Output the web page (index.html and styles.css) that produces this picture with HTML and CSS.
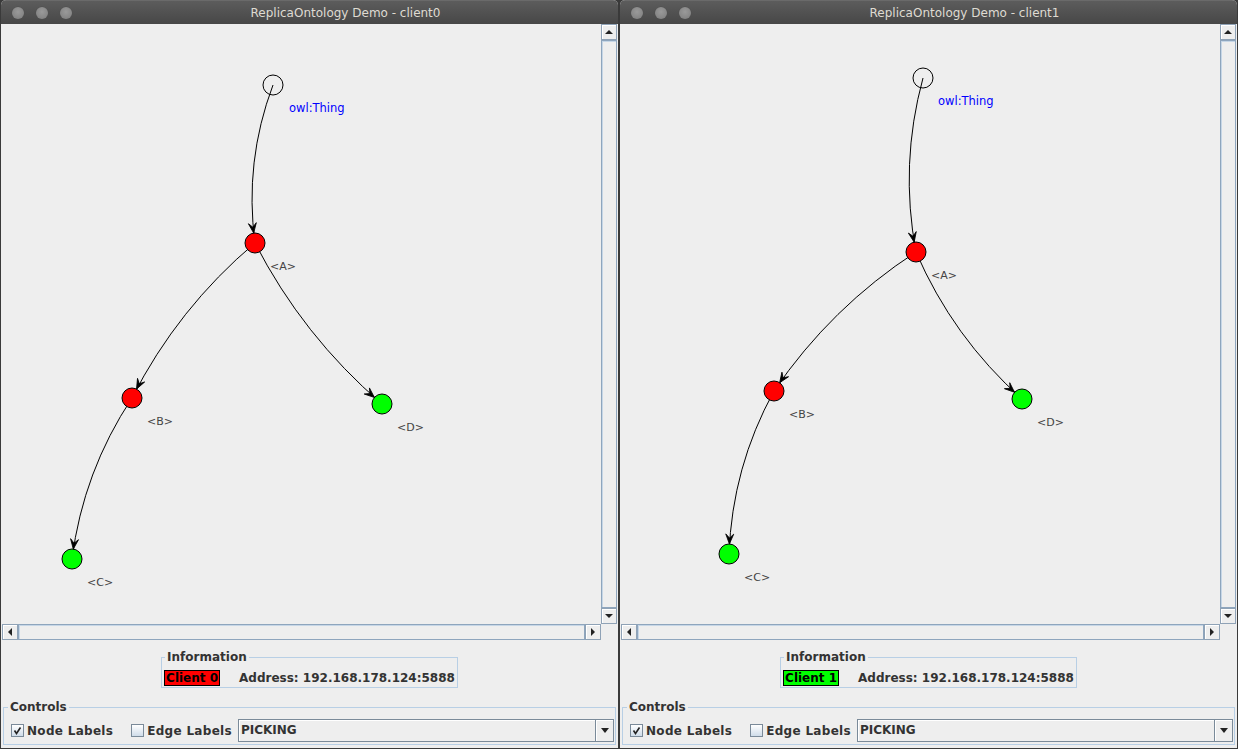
FILE: index.html
```html
<!DOCTYPE html>
<html>
<head>
<meta charset="utf-8">
<link rel="stylesheet" href="styles.css">
</head>
<body>
<div class="desktop">
  <div class="window">
    <div class="titlebar">
      <div class="wbuttons"><span class="wbtn"></span><span class="wbtn"></span><span class="wbtn"></span></div>
      <div class="wtitle">ReplicaOntology Demo - client0</div>
    </div>
    <div class="scrollpane">
      <svg class="canvas" width="600" height="600" viewBox="1 24 600 600">
        <g class="edges">
          <path d="M273 85 Q244.13 161.74 255 243"/>
          <path d="M255 243 Q177.83 308.07 132 398"/>
          <path d="M255 243 Q302.8 335.89 382 404"/>
          <path d="M132 398 Q83.26 471.52 72 559"/>
        </g>
        <g class="arrows">
          <polygon points="0,0 -10,-4 -6,0 -10,4" transform="translate(253.67 233.09) rotate(82.38)"/>
          <polygon points="0,0 -10,-4 -6,0 -10,4" transform="translate(136.54 389.09) rotate(117)"/>
          <polygon points="0,0 -10,-4 -6,0 -10,4" transform="translate(374.42 397.48) rotate(40.7)"/>
          <polygon points="0,0 -10,-4 -6,0 -10,4" transform="translate(73.28 549.08) rotate(97.3)"/>
        </g>
        <circle class="node root" cx="273" cy="85" r="10"/>
        <circle class="node red" cx="255" cy="243" r="10"/>
        <circle class="node red" cx="132" cy="398" r="10"/>
        <circle class="node green" cx="382" cy="404" r="10"/>
        <circle class="node green" cx="72" cy="559" r="10"/>
        <text class="lbl thing" x="289" y="112">owl:Thing</text>
        <text class="lbl" x="270" y="270">&lt;A&gt;</text>
        <text class="lbl" x="147" y="425">&lt;B&gt;</text>
        <text class="lbl" x="397" y="431">&lt;D&gt;</text>
        <text class="lbl" x="87" y="586">&lt;C&gt;</text>
      </svg>
      <div class="vscroll">
        <div class="sbtn"><span class="tri-up"></span></div>
        <div class="thumb"></div>
        <div class="sbtn"><span class="tri-down"></span></div>
      </div>
      <div class="hscroll">
        <div class="sbtn"><span class="tri-left"></span></div>
        <div class="thumb"></div>
        <div class="sbtn"><span class="tri-right"></span></div>
      </div>
      <div class="corner"></div>
    </div>
    <div class="info-row">
      <fieldset class="info">
        <legend>Information</legend>
        <span class="badge badge-red">Client 0</span>
        <span class="addr">Address: 192.168.178.124:5888</span>
      </fieldset>
    </div>
    <fieldset class="controls">
      <legend>Controls</legend>
      <label class="chk"><span class="box checked"><svg width="9" height="9" viewBox="0 0 9 9"><path d="M1.5 4.5 L3.5 7.5 L7.5 1.5" fill="none" stroke="#222" stroke-width="1.6"/></svg></span>Node Labels</label>
      <label class="chk chk2"><span class="box"></span>Edge Labels</label>
      <div class="combo"><span class="combo-text">PICKING</span><span class="combo-btn"><span class="tri-down"></span></span></div>
    </fieldset>
  </div>

  <div class="window">
    <div class="titlebar">
      <div class="wbuttons"><span class="wbtn"></span><span class="wbtn"></span><span class="wbtn"></span></div>
      <div class="wtitle">ReplicaOntology Demo - client1</div>
    </div>
    <div class="scrollpane">
      <svg class="canvas" width="600" height="600" viewBox="620 24 600 600">
        <g class="edges">
          <path d="M923 78 Q899.52 164.2 916 252"/>
          <path d="M916 252 Q831.01 307.21 774 391"/>
          <path d="M916 252 Q952.78 337.2 1022 399"/>
          <path d="M774 391 Q732.22 467.18 729 554"/>
        </g>
        <g class="arrows">
          <polygon points="0,0 -10,-4 -6,0 -10,4" transform="translate(914.16 242.17) rotate(79.37)"/>
          <polygon points="0,0 -10,-4 -6,0 -10,4" transform="translate(779.63 382.73) rotate(124.2)"/>
          <polygon points="0,0 -10,-4 -6,0 -10,4" transform="translate(1014.54 392.34) rotate(41.76)"/>
          <polygon points="0,0 -10,-4 -6,0 -10,4" transform="translate(729.37 544.01) rotate(92.1)"/>
        </g>
        <circle class="node root" cx="923" cy="78" r="10"/>
        <circle class="node red" cx="916" cy="252" r="10"/>
        <circle class="node red" cx="774" cy="391" r="10"/>
        <circle class="node green" cx="1022" cy="399" r="10"/>
        <circle class="node green" cx="729" cy="554" r="10"/>
        <text class="lbl thing" x="938" y="105">owl:Thing</text>
        <text class="lbl" x="931" y="279">&lt;A&gt;</text>
        <text class="lbl" x="789" y="418">&lt;B&gt;</text>
        <text class="lbl" x="1037" y="426">&lt;D&gt;</text>
        <text class="lbl" x="744" y="581">&lt;C&gt;</text>
      </svg>
      <div class="vscroll">
        <div class="sbtn"><span class="tri-up"></span></div>
        <div class="thumb"></div>
        <div class="sbtn"><span class="tri-down"></span></div>
      </div>
      <div class="hscroll">
        <div class="sbtn"><span class="tri-left"></span></div>
        <div class="thumb"></div>
        <div class="sbtn"><span class="tri-right"></span></div>
      </div>
      <div class="corner"></div>
    </div>
    <div class="info-row">
      <fieldset class="info">
        <legend>Information</legend>
        <span class="badge badge-green">Client 1</span>
        <span class="addr">Address: 192.168.178.124:5888</span>
      </fieldset>
    </div>
    <fieldset class="controls">
      <legend>Controls</legend>
      <label class="chk"><span class="box checked"><svg width="9" height="9" viewBox="0 0 9 9"><path d="M1.5 4.5 L3.5 7.5 L7.5 1.5" fill="none" stroke="#222" stroke-width="1.6"/></svg></span>Node Labels</label>
      <label class="chk chk2"><span class="box"></span>Edge Labels</label>
      <div class="combo"><span class="combo-text">PICKING</span><span class="combo-btn"><span class="tri-down"></span></span></div>
    </fieldset>
  </div>
</div>
</body>
</html>
```
FILE: styles.css
```css
* { box-sizing: border-box; }
html, body {
  margin: 0;
  padding: 0;
}
body {
  width: 1238px;
  height: 749px;
  overflow: hidden;
  background: #3a3a3a;
  font-family: "DejaVu Sans", "Liberation Sans", sans-serif;
}
.desktop {
  display: flex;
  gap: 2px;
  padding-left: 1px;
  height: 749px;
}
.window {
  width: 617px;
  height: 748px;
  display: flex;
  flex-direction: column;
  background: #eeeeee;
  border-radius: 5px 5px 0 0;
  overflow: hidden;
}
.titlebar {
  height: 24px;
  flex: none;
  display: flex;
  align-items: center;
  background: linear-gradient(#5c5c5c, #474747);
  border-top: 1px solid #6a6a6a;
}
.wbuttons {
  width: 72px;
  flex: none;
  display: flex;
  gap: 12px;
  padding-left: 11px;
}
.wbtn {
  width: 12px;
  height: 12px;
  border-radius: 50%;
  background: radial-gradient(circle at 50% 40%, #9a9a9a, #7c7c7c);
  box-shadow: 0 0 0 0.5px #505050;
}
.wtitle {
  flex: 1;
  text-align: center;
  color: #dfdbd2;
  font-size: 12px;
  line-height: 14px;
}
.scrollpane {
  flex: none;
  display: grid;
  grid-template-columns: 600px 16px;
  grid-template-rows: 600px 16px;
}
.canvas {
  display: block;
  background: #eeeeee;
}
.edges path {
  fill: none;
  stroke: #000;
  stroke-width: 1;
}
.arrows polygon {
  fill: #000;
  stroke: #000;
  stroke-width: 0.8;
  stroke-linejoin: miter;
}
.node {
  stroke: #000;
  stroke-width: 1;
}
.node.root { fill: none; }
.node.red { fill: #ff0000; }
.node.green { fill: #00ff00; }
.lbl {
  font-family: "DejaVu Sans", sans-serif;
  font-size: 11px;
  fill: #444444;
}
.lbl.thing {
  fill: #0000ff;
  font-size: 11.5px;
}
.vscroll {
  display: flex;
  flex-direction: column;
}
.hscroll {
  display: flex;
  padding-left: 1px;
}
.sbtn {
  width: 16px;
  height: 16px;
  flex: none;
  display: flex;
  align-items: center;
  justify-content: center;
  background: #eeeeee;
  border: 1px solid #8fa2b6;
  box-shadow: inset 1px 1px 0 #ffffff;
}
.thumb {
  flex: 1;
  background: #eeeeee;
  border: 1px solid #8ea5bd;
  box-shadow: inset 1px 1px 0 #c6d6e6;
}
.tri-up, .tri-down, .tri-left, .tri-right {
  width: 0;
  height: 0;
  display: block;
}
.tri-up {
  border-left: 4px solid transparent;
  border-right: 4px solid transparent;
  border-bottom: 4px solid #222;
}
.tri-down {
  border-left: 4px solid transparent;
  border-right: 4px solid transparent;
  border-top: 4px solid #222;
}
.tri-left {
  border-top: 4px solid transparent;
  border-bottom: 4px solid transparent;
  border-right: 4px solid #222;
}
.tri-right {
  border-top: 4px solid transparent;
  border-bottom: 4px solid transparent;
  border-left: 4px solid #222;
}
.info-row {
  display: flex;
  justify-content: center;
  padding-top: 10px;
  flex: none;
}
fieldset {
  margin: 0;
  min-width: 0;
}
legend {
  font-size: 12px;
  line-height: 14px;
  font-weight: bold;
  color: #333333;
  padding: 0 2px;
}
.info {
  display: flex;
  align-items: center;
  gap: 19px;
  border: 1px solid #b8cfe5;
  padding: 6px 2px 1px 2px;
}
.info legend {
  margin-left: 1px;
}
.badge {
  height: 16px;
  padding: 0 1px;
  border: 1px solid #000;
  font-size: 12px;
  line-height: 14px;
  font-weight: bold;
  color: #000;
}
.badge-red { background: #ff0000; }
.badge-green { background: #00ff00; }
.addr {
  font-size: 12px;
  line-height: 14px;
  font-weight: bold;
  color: #333333;
}
.controls {
  flex: none;
  margin: 12px 2px 0 2px;
  border: 1px solid #b8cfe5;
  padding: 5px 1px 2px 7px;
  display: flex;
  align-items: center;
}
.controls legend {
  margin-left: -3px;
}
.chk {
  display: flex;
  align-items: center;
  gap: 3px;
  font-size: 12px;
  line-height: 14px;
  font-weight: bold;
  letter-spacing: 0.3px;
  color: #333333;
}
.chk2 {
  margin-left: 18px;
}
.box {
  width: 13px;
  height: 13px;
  border: 1px solid #7a8a99;
  background: linear-gradient(#ffffff, #cfdce9);
  display: flex;
  align-items: center;
  justify-content: center;
}
.combo {
  flex: 1;
  margin-left: 6px;
  height: 23px;
  display: flex;
  align-items: stretch;
  border: 1px solid #7a8a99;
  background: #eeeeee;
}
.combo-text {
  flex: 1;
  padding-left: 2px;
  font-size: 12px;
  line-height: 21px;
  font-weight: bold;
  color: #333333;
  box-shadow: inset 1px 1px 0 #ffffff;
}
.combo-btn {
  width: 18px;
  display: flex;
  align-items: center;
  justify-content: center;
  border-left: 1px solid #7a8a99;
  box-shadow: inset 1px 1px 0 #ffffff;
}
.combo-btn .tri-down {
  border-left-width: 4px;
  border-right-width: 4px;
  border-top-width: 5px;
}
.corner {
  background: #eeeeee;
}
```
